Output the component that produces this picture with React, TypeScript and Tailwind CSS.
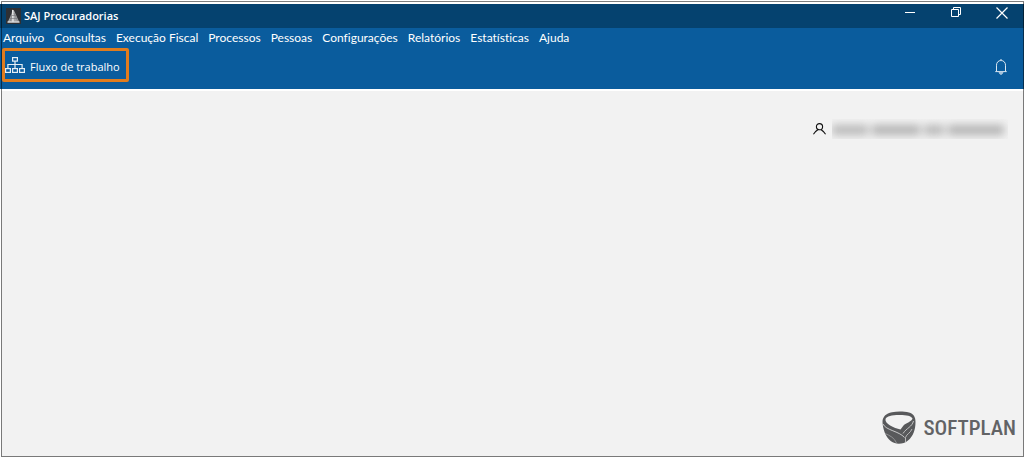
import React from 'react';

const MENU = [
  'Arquivo',
  'Consultas',
  'Execução Fiscal',
  'Processos',
  'Pessoas',
  'Configurações',
  'Relatórios',
  'Estatísticas',
  'Ajuda',
];

function AppIcon() {
  return (
    <svg width="15" height="16" viewBox="0 0 15 16" aria-hidden="true">
      <rect width="15" height="16" fill="#2f3034" />
      <path d="M6.500 1.500L8 2.500L13.500 14.500H1.500L5.500 6Z" fill="#a4a4a6" />
      <path d="M6.700 2L7 14" stroke="#f2f2f2" strokeWidth="1.200" />
      <path d="M4.500 7.500h5.500M3.500 10.500h8" stroke="#707175" strokeWidth="0.600" />
      <path d="M8 5L11.500 13M5.500 8L4.500 13" stroke="#77787c" strokeWidth="0.600" />
      <path d="M1.500 14h12" stroke="#dedede" strokeWidth="1.200" />
    </svg>
  );
}

function FlowIcon() {
  return (
    <svg width="20" height="18" viewBox="0 0 20 18" fill="none" stroke="#e6eff6" strokeWidth="1.200" aria-hidden="true">
      <rect x="7.600" y="1.600" width="4.800" height="3.500" />
      <path d="M10 5V12.500M2.900 12.500V8.500H17.100V12.500" />
      <rect x="0.600" y="12.600" width="4.800" height="3.800" />
      <rect x="7.600" y="12.600" width="4.800" height="3.800" />
      <rect x="14.600" y="12.600" width="4.800" height="3.800" />
    </svg>
  );
}

function BellIcon() {
  return (
    <svg width="12" height="16" viewBox="0 0 12 16" fill="none" stroke="#dce8f2" strokeWidth="1" aria-hidden="true">
      <path d="M0.300 12.600H11.700M1.500 12.400V6.200C1.500 3.500 3.300 1.500 6 1.500S10.500 3.500 10.500 6.200V12.400" />
      <path d="M5 1.200Q6 0 7 1.200M4 13.200H8L6.800 15.200H5.200Z" fill="#9bbbd6" stroke="#b4cce0" />
    </svg>
  );
}

function UserIcon() {
  return (
    <svg width="13" height="12" viewBox="0 0 13 12" fill="none" stroke="#111" strokeWidth="1.100" aria-hidden="true">
      <circle cx="6.500" cy="3.700" r="3.100" />
      <path d="M0.400 11.300Q2 8.500 4.800 6.800M12.600 11.300Q11 8.500 8.200 6.800" />
    </svg>
  );
}

function SoftplanIcon() {
  return (
    <svg width="34" height="34" viewBox="0 0 34 34" aria-hidden="true">
      <path
        d="M.5 11C.5 5.500 4 2.500 10 1.200C15 .3 22 .3 27 1.500C31.500 2.800 33.600 6 33.500 11C33.500 19 31 25.500 26 29.500C21.500 33.500 13.500 33.800 9 30.300C3.500 26 .8 18 .5 11Z"
        fill="#58595b"
      />
      <path
        d="M3.500 8C4.500 5 10 4.200 17 4C24 3.900 29.500 5 30.500 7.500C30 10.500 24 12 21.500 14.500L18.500 18.500C12 17 2.500 13 3.500 8Z"
        fill="#f2f2f2"
      />
      <path d="M1 13C4 19.500 17 20 22.500 26.500" fill="none" stroke="#e4e4e4" strokeWidth="0.800" />
      <path d="M31.500 10C30 16 24.500 17 21 22.500" fill="none" stroke="#dcdcdc" strokeWidth="0.800" />
      <path d="M30 18C28.500 22 24.500 23 23.500 26.500V31" fill="none" stroke="#d0d0d0" strokeWidth="0.800" />
      <path d="M3 22.500C8 24.500 12.500 27 14.500 32" fill="none" stroke="#a8a8a9" strokeWidth="0.700" />
    </svg>
  );
}

export default function App() {
  return (
    <div className="relative flex min-h-screen flex-col bg-white pt-1 pr-px pb-px font-['Open_Sans','Noto_Sans',sans-serif] text-[11px] text-white">
      <header className="bg-[#0a5c9d]">
        <div className="flex h-6 items-center bg-[#05426f] pl-1.5">
          <AppIcon />
          <h1 className="ml-[3px] font-semibold">SAJ Procuradorias</h1>
          <div className="ml-auto flex gap-2 pr-1">
            <button type="button" aria-label="Minimizar" className="flex h-6 w-9 justify-center pt-2">
              <svg width="10" height="2" viewBox="0 0 10 2" aria-hidden="true">
                <path d="M0 .5H10" stroke="#fff" />
              </svg>
            </button>
            <button type="button" aria-label="Restaurar" className="flex h-6 w-10 justify-center pt-[3px]">
              <svg width="10" height="10" viewBox="0 0 10 10" fill="none" stroke="#fff" aria-hidden="true">
                <path d="M.5 2.500H7.500V9.500H.5ZM2.500 2.500V.5H9.500V7.500H7.500" />
              </svg>
            </button>
            <button type="button" aria-label="Fechar" className="flex h-6 w-9 justify-center pt-[3px]">
              <svg width="12" height="12" viewBox="0 0 12 12" fill="none" stroke="#fff" strokeWidth="1.200" aria-hidden="true">
                <path d="M.5 .5L11.500 11.500M11.500 .5L.5 11.500" />
              </svg>
            </button>
          </div>
        </div>
        <nav className="flex h-5 items-center gap-2.5 pl-[3px] font-['Lato','Open_Sans',sans-serif] text-xs [font-variant-ligatures:none]">
          {MENU.map((item) => (
            <button key={item} type="button" className="whitespace-nowrap">
              {item}
            </button>
          ))}
        </nav>
        <div className="flex h-[41px] items-start justify-between pl-0.5 pr-[17px]">
          <button
            type="button"
            className="flex h-[34px] w-[127px] items-center gap-[5px] whitespace-nowrap rounded-xs border-3 border-[#e07c1e]"
          >
            <FlowIcon />
            <span className="pt-1">Fluxo de trabalho</span>
          </button>
          <button type="button" aria-label="Notificações" className="pt-[11px]">
            <BellIcon />
          </button>
        </div>
      </header>
      <main className="mt-0.5 ml-px flex flex-1 flex-col items-end justify-between bg-[#f2f2f2] pt-7 pr-2 pb-3">
        <div className="flex items-center gap-1.5 pr-2">
          <UserIcon />
          <div className="h-5 w-44 overflow-hidden" aria-hidden="true">
            <div className="mt-1.5 flex h-2.5 gap-1 pr-1 blur-[4px]">
              <div className="w-9 bg-[#b8b8b8]" />
              <div className="w-12 bg-[#b2b2b2]" />
              <div className="w-5 bg-[#b8b8b8]" />
              <div className="flex-1 bg-[#b2b2b2]" />
            </div>
          </div>
        </div>
        <div className="flex items-center gap-[7px] font-['Roboto_Condensed','Open_Sans_Condensed','Roboto',sans-serif] text-[21px] font-medium leading-8 text-[#626365]">
          <SoftplanIcon />
          SOFTPLAN
        </div>
      </main>
      <div className="pointer-events-none absolute inset-px border border-black/50" />
    </div>
  );
}
